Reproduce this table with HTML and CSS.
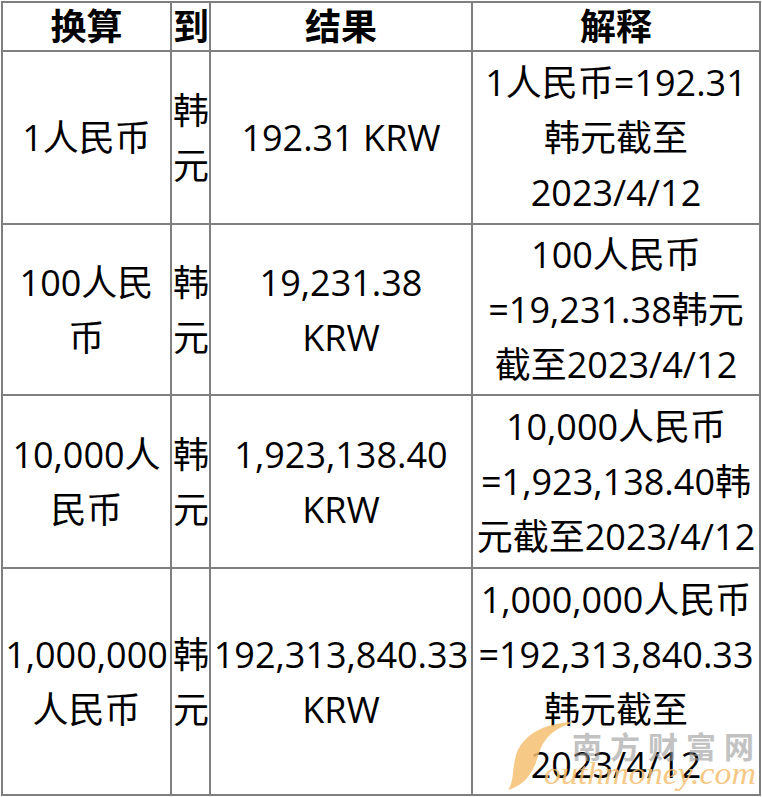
FILE: index.html
```html
<!DOCTYPE html>
<html lang="zh-CN">
<head>
<meta charset="utf-8">
<title>人民币兑韩元</title>
<link rel="stylesheet" href="styles.css">
</head>
<body>
<div class="wrap">
  <table class="rates">
    <thead>
      <tr class="head">
        <th class="c1">换算</th>
        <th class="c2">到</th>
        <th class="c3">结果</th>
        <th class="c4">解释</th>
      </tr>
    </thead>
    <tbody>
      <tr class="r1">
        <td>1人民币</td>
        <td>韩元</td>
        <td>192.31 KRW</td>
        <td>1人民币=192.31韩元截至2023/4/12</td>
      </tr>
      <tr class="r2">
        <td>100人民币</td>
        <td>韩元</td>
        <td>19,231.38<br>KRW</td>
        <td>100人民币=19,231.38韩元截至2023/4/12</td>
      </tr>
      <tr class="r3">
        <td>10,000人民币</td>
        <td>韩元</td>
        <td>1,923,138.40 KRW</td>
        <td>10,000人民币=1,923,138.40韩元截至2023/4/12</td>
      </tr>
      <tr class="r4">
        <td>1,000,000人民币</td>
        <td>韩元</td>
        <td>192,313,840.33 KRW</td>
        <td>1,000,000人民币=192,313,840.33韩元截至2023/4/12</td>
      </tr>
    </tbody>
  </table>
  <svg class="watermark" width="262" height="97" viewBox="0 0 262 97" aria-hidden="true">
    <path class="swoosh" d="M8,90 C28,84 35,68 39,53 C44,37 55,28 74,22 C42,23 22,36 16,55 C12,70 14,82 8,90 Z"/>
    <text class="wm-cn" x="72" y="58" textLength="182" lengthAdjust="spacing">南方财富网</text>
    <text class="wm-en" x="44" y="84" textLength="212" lengthAdjust="spacingAndGlyphs">outhmoney.com</text>
  </svg>
</div>
</body>
</html>
```

FILE: styles.css
```css
html, body {
  margin: 0;
  padding: 0;
  background: #ffffff;
}

.wrap {
  position: relative;
  width: 762px;
  height: 797px;
  padding: 1px 0 0 1px;
  box-sizing: border-box;
}

.rates {
  box-sizing: border-box;
  width: 760px;
  table-layout: fixed;
  border-collapse: separate;
  border-spacing: 0;
  border-top: 2px solid #7f7f7f;
  border-left: 2px solid #7f7f7f;
  font-family: "Open Sans", "Noto Sans CJK SC", sans-serif;
  font-size: 36px;
  color: #000;
}

.rates th,
.rates td {
  box-sizing: border-box;
  border-right: 2px solid #7f7f7f;
  border-bottom: 2px solid #7f7f7f;
  padding: 0 1px;
  text-align: center;
  vertical-align: middle;
  line-height: 55px;
}

.rates th {
  font-weight: bold;
  line-height: 46px;
}

.c1 { width: 169px; }
.c2 { width: 39px; }
.c3 { width: 262px; }
.c4 { width: 288px; }

.head { height: 49px; }
.r1 { height: 173px; }
.r2 { height: 171px; }
.r3 { height: 173px; }
.r4 { height: 227px; }

.watermark {
  position: absolute;
  left: 500px;
  top: 700px;
  pointer-events: none;
}

.swoosh {
  fill: #f5bf72;
  opacity: 0.85;
}

.wm-cn {
  font-family: "Noto Sans CJK SC", sans-serif;
  font-size: 30px;
  font-weight: bold;
  fill: #9a9a9a;
  opacity: 0.6;
}

.wm-en {
  font-family: "Liberation Serif", serif;
  font-style: italic;
  font-size: 32px;
  fill: #f5bf72;
  opacity: 0.85;
}
```
